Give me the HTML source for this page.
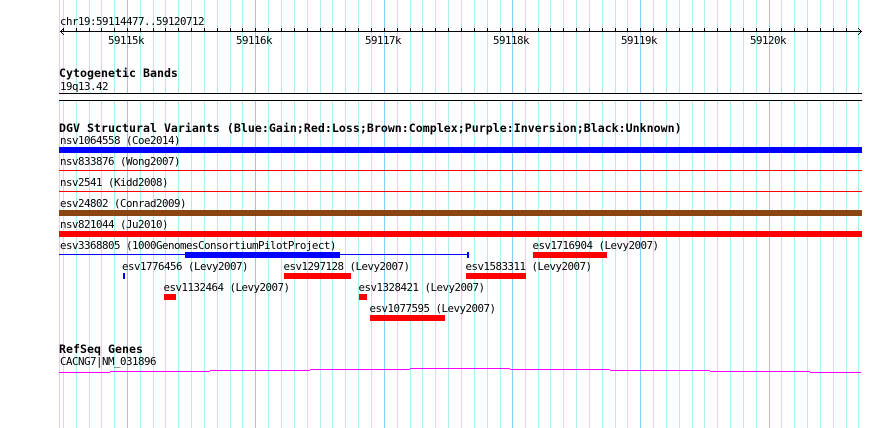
<!DOCTYPE html>
<html>
<head>
<meta charset="utf-8">
<style>
html,body{margin:0;padding:0;background:#fff;}
body{width:890px;height:428px;position:relative;overflow:hidden;}
svg{position:absolute;left:0;top:0;}
.t{font-family:"DejaVu Sans Mono","Liberation Mono",monospace;font-size:10.8px;letter-spacing:-0.502px;fill:#000;}
.b{font-family:"DejaVu Sans Mono","Liberation Mono",monospace;font-size:11.6px;letter-spacing:0.016px;font-weight:bold;fill:#000;}
</style>
</head>
<body>
<svg width="890" height="428" viewBox="0 0 890 428" xmlns="http://www.w3.org/2000/svg" shape-rendering="crispEdges">
<path fill="none" stroke="#afeeee" stroke-width="1" d="M59.5 0V428M63.5 0V428M76.5 0V428M89.5 0V428M101.5 0V428M114.5 0V428M140.5 0V428M153.5 0V428M165.5 0V428M178.5 0V428M191.5 0V428M204.5 0V428M217.5 0V428M230.5 0V428M242.5 0V428M268.5 0V428M281.5 0V428M294.5 0V428M307.5 0V428M320.5 0V428M332.5 0V428M345.5 0V428M358.5 0V428M371.5 0V428M397.5 0V428M410.5 0V428M422.5 0V428M435.5 0V428M448.5 0V428M461.5 0V428M474.5 0V428M487.5 0V428M500.5 0V428M525.5 0V428M538.5 0V428M550.5 0V428M563.5 0V428M576.5 0V428M589.5 0V428M602.5 0V428M615.5 0V428M627.5 0V428M653.5 0V428M666.5 0V428M679.5 0V428M692.5 0V428M704.5 0V428M717.5 0V428M730.5 0V428M743.5 0V428M756.5 0V428M781.5 0V428M794.5 0V428M807.5 0V428M820.5 0V428M833.5 0V428M846.5 0V428M858.5 0V428"/>
<path fill="none" stroke="#87cefa" stroke-width="1" d="M127.5 0V428M255.5 0V428M384.5 0V428M512.5 0V428M640.5 0V428M769.5 0V428"/>

<!-- ruler -->
<path fill="none" stroke="#000" stroke-width="1" d="M60 31.5H862M63.5 28V32M76.5 28V32M89.5 28V32M101.5 28V32M114.5 28V32M127.5 28V32M140.5 28V32M153.5 28V32M165.5 28V32M178.5 28V32M191.5 28V32M204.5 28V32M217.5 28V32M230.5 28V32M242.5 28V32M255.5 28V32M268.5 28V32M281.5 28V32M294.5 28V32M307.5 28V32M320.5 28V32M332.5 28V32M345.5 28V32M358.5 28V32M371.5 28V32M384.5 28V32M397.5 28V32M410.5 28V32M422.5 28V32M435.5 28V32M448.5 28V32M461.5 28V32M474.5 28V32M487.5 28V32M500.5 28V32M512.5 28V32M525.5 28V32M538.5 28V32M550.5 28V32M563.5 28V32M576.5 28V32M589.5 28V32M602.5 28V32M615.5 28V32M627.5 28V32M640.5 28V32M653.5 28V32M666.5 28V32M679.5 28V32M692.5 28V32M704.5 28V32M717.5 28V32M730.5 28V32M743.5 28V32M756.5 28V32M769.5 28V32M781.5 28V32M794.5 28V32M807.5 28V32M820.5 28V32M833.5 28V32M846.5 28V32"/>
<path fill="#000" d="M60 31h1v1h-1zM61 30h1v3h-1zM62 29h1v1h-1zM62 33h1v1h-1zM63 28h1v1h-1zM63 34h1v1h-1zM861 31h1v1h-1zM860 30h1v3h-1zM859 29h1v1h-1zM859 33h1v1h-1zM858 28h1v1h-1zM858 34h1v1h-1z"/>
<text class="t" x="60" y="25">chr19:59114477..59120712</text>
<text class="t" x="108" y="44">59115k</text>
<text class="t" x="236" y="44">59116k</text>
<text class="t" x="365" y="44">59117k</text>
<text class="t" x="493" y="44">59118k</text>
<text class="t" x="621" y="44">59119k</text>
<text class="t" x="750" y="44">59120k</text>

<!-- cytogenetic -->
<text class="b" x="59" y="77">Cytogenetic Bands</text>
<text class="t" x="60" y="90">19q13.42</text>
<rect x="59" y="94" width="803" height="6" fill="#fff"/>
<rect x="59" y="93" width="803" height="1" fill="#000"/>
<rect x="59" y="100" width="803" height="1" fill="#000"/>

<!-- DGV -->
<text class="b" x="59" y="132">DGV Structural Variants (Blue:Gain;Red:Loss;Brown:Complex;Purple:Inversion;Black:Unknown)</text>
<text class="t" x="60" y="144">nsv1064558 (Coe2014)</text>
<rect x="59" y="147" width="803" height="6" fill="#0000ff"/>
<text class="t" x="60" y="165">nsv833876 (Wong2007)</text>
<rect x="59" y="170" width="803" height="1" fill="#ff0000"/>
<text class="t" x="60" y="186">nsv2541 (Kidd2008)</text>
<rect x="59" y="191" width="803" height="1" fill="#ff0000"/>
<text class="t" x="60" y="207">esv24802 (Conrad2009)</text>
<rect x="59" y="210" width="803" height="6" fill="#8b4513"/>
<text class="t" x="60" y="228">nsv821044 (Ju2010)</text>
<rect x="59" y="231" width="803" height="6" fill="#ff0000"/>

<text class="t" x="60" y="249">esv3368805 (1000GenomesConsortiumPilotProject)</text>
<rect x="59" y="254" width="409" height="1" fill="#0000ff"/>
<rect x="185" y="252" width="155" height="6" fill="#0000ff"/>
<rect x="467" y="252" width="2" height="6" fill="#0000ff"/>

<text class="t" x="532.5" y="249">esv1716904 (Levy2007)</text>
<rect x="533" y="252" width="74" height="6" fill="#ff0000"/>

<text class="t" x="122" y="270">esv1776456 (Levy2007)</text>
<rect x="123" y="273" width="2" height="6" fill="#0000ff"/>
<text class="t" x="283.5" y="270">esv1297128 (Levy2007)</text>
<rect x="284" y="273" width="67" height="6" fill="#ff0000"/>
<text class="t" x="465.5" y="270">esv1583311 (Levy2007)</text>
<rect x="466" y="273" width="60" height="6" fill="#ff0000"/>

<text class="t" x="163.5" y="291">esv1132464 (Levy2007)</text>
<rect x="164" y="294" width="12" height="6" fill="#ff0000"/>
<text class="t" x="358.5" y="291">esv1328421 (Levy2007)</text>
<rect x="359" y="294" width="8" height="6" fill="#ff0000"/>
<text class="t" x="369.5" y="312">esv1077595 (Levy2007)</text>
<rect x="370" y="315" width="75" height="6" fill="#ff0000"/>

<!-- RefSeq -->
<text class="b" x="59" y="353">RefSeq Genes</text>
<text class="t" x="60" y="365">CACNG7|NM_031896</text>
<g fill="#ff00ff">
<rect x="59" y="372" width="51" height="1"/>
<rect x="110" y="371" width="100" height="1"/>
<rect x="210" y="370" width="100" height="1"/>
<rect x="310" y="369" width="100" height="1"/>
<rect x="410" y="368" width="100" height="1"/>
<rect x="510" y="369" width="100" height="1"/>
<rect x="610" y="370" width="100" height="1"/>
<rect x="710" y="371" width="100" height="1"/>
<rect x="810" y="372" width="51" height="1"/>
</g>
</svg>
</body>
</html>
